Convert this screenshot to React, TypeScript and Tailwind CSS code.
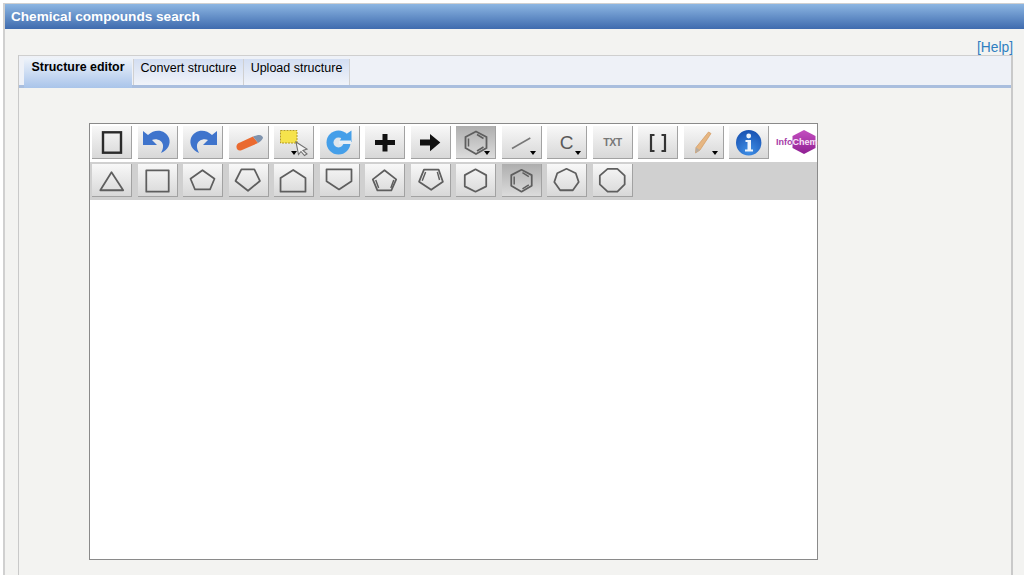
import type { ReactNode } from "react";

const ring = "#5e5e5e";

function Shape({ points, extra }: { points: string; extra?: string }) {
  return (
    <svg width="40" height="33" viewBox="0 0 40 33">
      <polygon points={points} fill="none" stroke={ring} strokeWidth="1.8" strokeLinejoin="round" />
      {extra && <path d={extra} fill="none" stroke={ring} strokeWidth="1.5" />}
    </svg>
  );
}

function Caret({ center }: { center?: boolean }) {
  return (
    <span
      className={`absolute bottom-[3px] w-0 h-0 border-x-[3px] border-x-transparent border-t-[4px] border-t-black ${
        center ? "left-[17px]" : "right-[5px]"
      }`}
    />
  );
}

function ToolButton({ children, active, caret, centerCaret }: { children: ReactNode; active?: boolean; caret?: boolean; centerCaret?: boolean }) {
  return (
    <div
      className={`relative w-[40px] h-[33px] shrink-0 flex items-center justify-center border-r border-b border-[#a2a2a2] ${
        active ? "bg-gradient-to-b from-[#aeaeae] to-[#dcdcdc]" : "bg-gradient-to-b from-[#f8f8f8] to-[#d8d8d8]"
      }`}
    >
      {children}
      {caret && <Caret center={centerCaret} />}
    </div>
  );
}

const Icon = ({ children }: { children: ReactNode }) => (
  <svg className="shrink-0" width="40" height="33" viewBox="0 0 40 33">
    {children}
  </svg>
);

const hexagon = "20,5.5 30.5,11 30.5,22 20,28 9.5,22 9.5,11";
const benzeneBonds = "M21 8.5 L27.5 12.5 M12.5 12.5 V20.5 M21 25 L27.5 21";

const topRow: { node: ReactNode; active?: boolean; caret?: boolean; centerCaret?: boolean }[] = [
  {
    node: (
      <Icon>
        <rect x="11" y="6.3" width="18" height="20.4" fill="none" stroke="#2a2a2a" strokeWidth="2.4" />
      </Icon>
    ),
  },
  {
    node: (
      <Icon>
        <path d="M6 5 V19 H20 L15 14 C19 12 25 14 26 19 C26.5 22 25 25 24 27 C31 24 34 18 32 12 C29 4 18 2 11 9 Z" fill="#3f74cc" />
      </Icon>
    ),
  },
  {
    node: (
      <Icon>
        <path d="M34 5 V19 H20 L25 14 C21 12 15 14 14 19 C13.5 22 15 25 16 27 C9 24 6 18 8 12 C11 4 22 2 29 9 Z" fill="#3f74cc" />
      </Icon>
    ),
  },
  {
    node: (
      <Icon>
        <path d="M8.5 20 C9 18 10 17 12 16.5 L25 10.5 L30 17 L14 24 C11 25.5 8 24 8.5 20 Z" fill="#ea6a30" />
        <path d="M25 10.5 L30 9 C33 8.5 35 10 35 12 C34 14 32 16 30 17 Z" fill="#7f93ad" />
      </Icon>
    ),
  },
  {
    node: (
      <Icon>
        <rect x="6.5" y="4.5" width="16.5" height="12.5" fill="#f6e34c" stroke="#b59c24" strokeWidth="1" strokeDasharray="2 1" />
        <path d="M22 16 L33 23 L29 24.5 L33 28 L30.5 29.5 L27 25.5 L24.5 28.5 Z" fill="#f2f2f2" stroke="#707070" strokeWidth="1.1" />
      </Icon>
    ),
    caret: true,
    centerCaret: true,
  },
  {
    node: (
      <Icon>
        <circle cx="19.5" cy="16.5" r="12" fill="#459fe9" />
        <circle cx="19.5" cy="16.5" r="5" fill="#dfe6ec" />
        <path d="M23 11 L32.5 4.5 V16 H20 Z" fill="#459fe9" />
        <path d="M20 14.5 H32 V18 H20 Z" fill="#e6eef5" />
      </Icon>
    ),
  },
  {
    node: (
      <Icon>
        <path d="M17.5 8 H22.5 V14 H30 V19 H22.5 V25.5 H17.5 V19 H10 V14 H17.5 Z" fill="#111" />
      </Icon>
    ),
  },
  {
    node: (
      <Icon>
        <path d="M10 13.5 H20 V8 L30.3 16.5 L20 25.3 V19.5 H10 Z" fill="#111" />
      </Icon>
    ),
  },
  {
    node: (
      <Icon>
        <polygon points={hexagon} fill="none" stroke={ring} strokeWidth="1.8" />
        <path d={benzeneBonds} stroke={ring} strokeWidth="1.5" />
      </Icon>
    ),
    active: true,
    caret: true,
  },
  {
    node: (
      <Icon>
        <path d="M11 22.5 L29.3 12" stroke="#777" strokeWidth="1.5" />
      </Icon>
    ),
    caret: true,
  },
  {
    node: <span className="text-[19px] text-[#5a5a5a] leading-none">C</span>,
    caret: true,
  },
  {
    node: <span className="pt-[2px] pl-[1px] text-[10.5px] font-bold text-[#777777] tracking-[-0.5px]">TXT</span>,
  },
  {
    node: (
      <Icon>
        <path d="M16.5 9 H13 V25 H16.5 M23.5 9 H27 V25 H23.5" fill="none" stroke="#333" strokeWidth="2.2" />
      </Icon>
    ),
  },
  {
    node: (
      <Icon>
        <path d="M25.5 6 L28 7.5 L17 24 L12.5 27 L13 21.5 Z" fill="#e6b682" stroke="#d29a5e" strokeWidth="0.7" />
        <path d="M13 21.5 L12.5 27 L17 24 Z" fill="#b5aca2" />
      </Icon>
    ),
    caret: true,
  },
  {
    node: (
      <Icon>
        <defs>
          <radialGradient id="infoBlue" cx="50%" cy="85%" r="80%">
            <stop offset="0%" stopColor="#3f8fe6" />
            <stop offset="100%" stopColor="#1a55b5" />
          </radialGradient>
        </defs>
        <circle cx="19.7" cy="16.7" r="12.7" fill="url(#infoBlue)" />
        <circle cx="19.7" cy="10" r="2.4" fill="#eef4fb" />
        <path d="M16.5 14 H22 V23.5 H24 V25.5 H16 V23.5 H18.5 V16 H16.5 Z" fill="#eef4fb" />
      </Icon>
    ),
  },
];

const bottomRow: { points: string; extra?: string; active?: boolean }[] = [
  { points: "20,8 32,26.5 8.5,26.5" },
  { points: "8.5,6 31.5,6 31.5,28 8.5,28" },
  { points: "20,6 32.3,14.7 27.7,25.7 12.3,25.7 7.7,14.7" },
  { points: "12.7,5 26,5 31.7,17 19.5,27 6.7,17" },
  { points: "19.7,5.7 32.3,14 32.3,28 6.7,28 6.7,14" },
  { points: "6.7,5 32.3,5 32.3,17.3 19.5,25.7 6.7,17.3" },
  { points: "20,6 32,15.3 27,26.7 12.7,26.7 8,15.3", extra: "M11 16 L14 24.3 M29.5 16 L26.5 24.3" },
  { points: "13.3,5.3 28.3,5.3 32.7,17.7 20.7,26 8.3,17.7", extra: "M15 7.7 L11.5 16.7 M27 7.7 L29.3 16" },
  { points: "20,5 31,11 31,22.5 20,28 9,22.5 9,11" },
  { points: hexagon, extra: benzeneBonds, active: true },
  { points: "20,4.5 29.5,9 32.5,18 26.5,26.5 13.5,26.5 7.5,18 10.5,9" },
  { points: "15,4.5 25,4.5 32.5,11.5 32.5,20.5 25,28 15,28 7,20.5 7,11.5" },
];

function Logo() {
  return (
    <div className="relative w-[41px] h-[33px] shrink-0 flex items-center pl-[1.5px]">
      <svg className="absolute left-[17px] top-[4px]" width="24" height="24" viewBox="0 0 24 24">
        <defs>
          <linearGradient id="hexPurple" x1="0" y1="0" x2="0" y2="1">
            <stop offset="0%" stopColor="#c44fc0" />
            <stop offset="100%" stopColor="#8f1f93" />
          </linearGradient>
        </defs>
        <polygon points="12,0 23.5,6 23.5,18 12,24 0.5,18 0.5,6" fill="url(#hexPurple)" />
      </svg>
      <span className="relative text-[9px] leading-none font-bold">
        <span className="text-[#a63ba8]">Info</span>
        <span className="text-[#f7e3f7]">Chem</span>
      </span>
    </div>
  );
}

export default function App() {
  return (
    <div className="h-[575px] overflow-hidden bg-white pt-[3px] pl-[3px] font-['Liberation_Sans',Arial,sans-serif]">
      <div className="h-full bg-[#f3f3f1] border-l-2 border-t border-[#d0d0d0]">
        {/* Title bar */}
        <div className="h-[25px] flex items-center pl-[6px] pt-[1px] bg-gradient-to-b from-[#8db6e2] to-[#3f6bae] text-white text-[13.6px] font-bold">
          Chemical compounds search
        </div>

        <div className="pl-[13px] pr-[11px]">
          <div className="h-[26px] pt-[11px] text-right text-[13.8px] leading-[16px] text-[#2f7fc1]">[Help]</div>

          {/* Tabbed panel */}
          <div className="border-l border-r-2 border-[#c9c9c9] h-[520px]">
            <div className="h-[33px] flex items-end pl-[5px] bg-[#eef1f7] border-t border-[#cfcfcf] border-b-[3px] border-b-[#a9bede]">
              <div className="h-[30px] -mb-[3px] w-[108px] flex items-start justify-center pt-[1px] text-[12.4px] leading-[16px] font-bold text-black bg-gradient-to-b from-[#eef3fa] to-[#a9c4ea]">
                Structure editor
              </div>
              <div className="h-[26px] ml-[1px] w-[111px] flex items-start justify-center pt-[1px] text-[12.5px] leading-[16px] text-black border-x border-[#d0d0d0] bg-gradient-to-b from-[#d3def2] to-[#f0f3f9]">
                Convert structure
              </div>
              <div className="h-[26px] w-[106px] flex items-start justify-center pt-[1px] text-[12.5px] leading-[16px] text-black border-r border-[#d0d0d0] bg-gradient-to-b from-[#d3def2] to-[#f0f3f9]">
                Upload structure
              </div>
            </div>

            {/* Editor */}
            <div className="pl-[70px] pt-[35px]">
              <div className="w-[729px] h-[437px] bg-white border border-[#8a8a8a]">
                <div className="h-[38px] pt-[2px] pl-[2px] flex gap-[5.5px] bg-white">
                  {topRow.map((b, i) => (
                    <ToolButton key={i} active={b.active} caret={b.caret} centerCaret={b.centerCaret}>
                      {b.node}
                    </ToolButton>
                  ))}
                  <Logo />
                </div>
                <div className="h-[38px] pt-[2px] pl-[2px] flex gap-[5.5px] bg-[#d0d0d0]">
                  {bottomRow.map((b, i) => (
                    <ToolButton key={i} active={b.active}>
                      <Shape points={b.points} extra={b.extra} />
                    </ToolButton>
                  ))}
                </div>
              </div>
            </div>
          </div>
        </div>
      </div>
    </div>
  );
}
